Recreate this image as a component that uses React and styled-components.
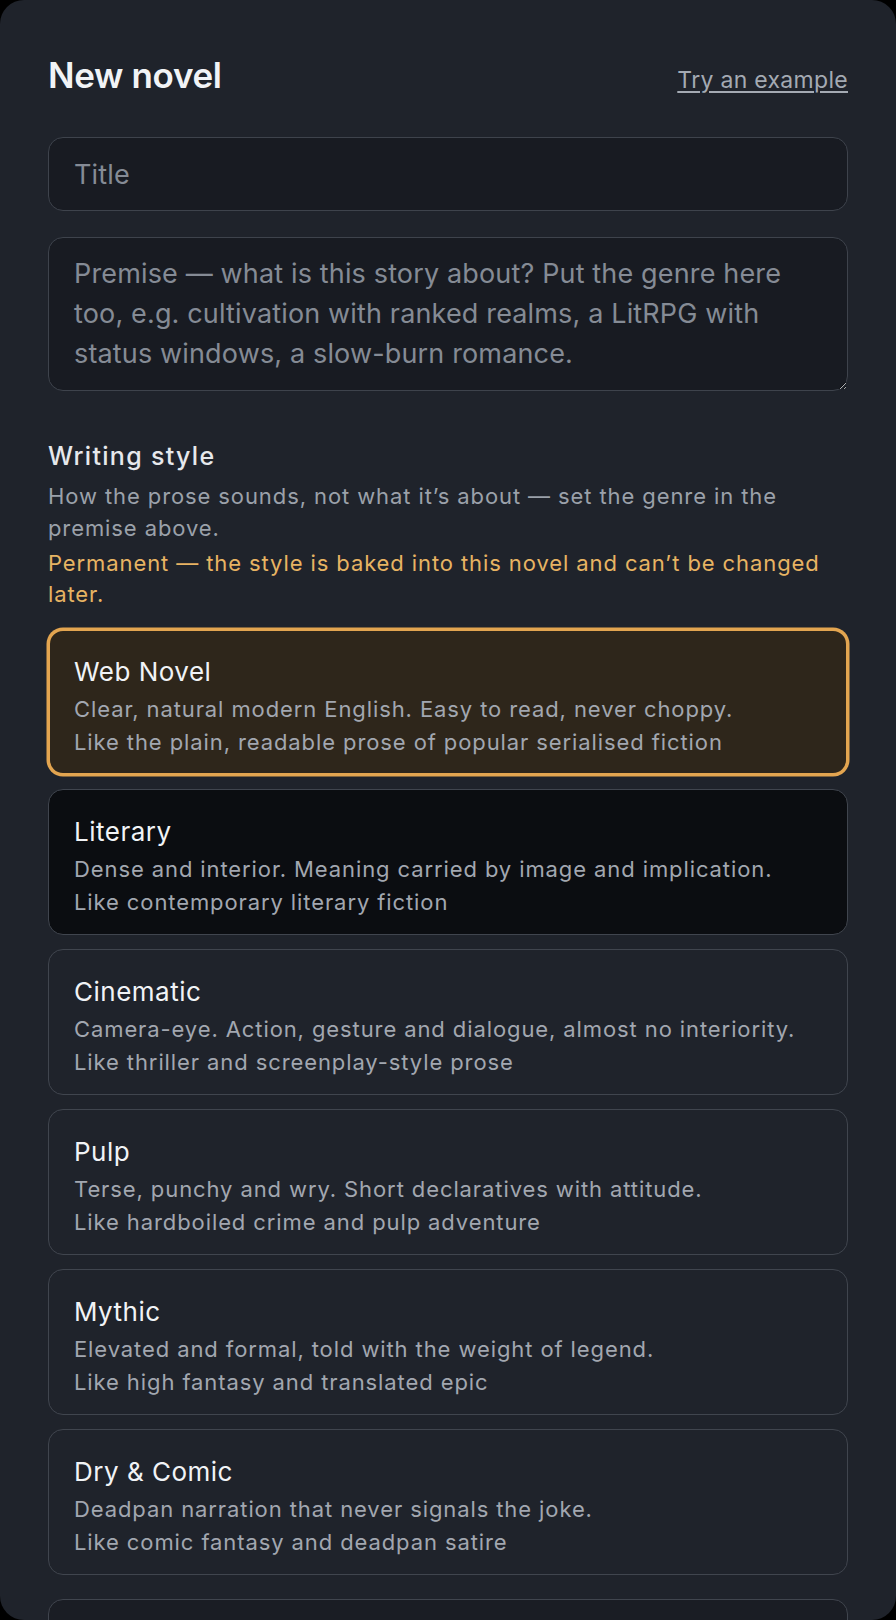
import React from 'react'
import styled, { createGlobalStyle } from 'styled-components'

const GlobalStyle = createGlobalStyle`
    * { box-sizing: border-box; }
    body {
        margin: 0;
        background: #000;
        font-family: Inter, "Noto Sans", "Liberation Sans", sans-serif;
        -webkit-font-smoothing: antialiased;
    }
`

const styles = [
    {
        id: 'web',
        name: 'Web Novel',
        lines: ['Clear, natural modern English. Easy to read, never choppy.', 'Like the plain, readable prose of popular serialised fiction'],
    },
    {
        id: 'literary',
        name: 'Literary',
        lines: ['Dense and interior. Meaning carried by image and implication.', 'Like contemporary literary fiction'],
    },
    {
        id: 'cinematic',
        name: 'Cinematic',
        lines: ['Camera-eye. Action, gesture and dialogue, almost no interiority.', 'Like thriller and screenplay-style prose'],
    },
    {
        id: 'pulp',
        name: 'Pulp',
        lines: ['Terse, punchy and wry. Short declaratives with attitude.', 'Like hardboiled crime and pulp adventure'],
    },
    {
        id: 'mythic',
        name: 'Mythic',
        lines: ['Elevated and formal, told with the weight of legend.', 'Like high fantasy and translated epic'],
    },
    {
        id: 'dry',
        name: 'Dry & Comic',
        lines: ['Deadpan narration that never signals the joke.', 'Like comic fantasy and deadpan satire'],
    },
]

const App = () => {
    return (
        <>
            <GlobalStyle />
            <Panel>
                <Header>
                    <Heading>New novel</Heading>
                    <ExampleLink href="#">Try an example</ExampleLink>
                </Header>

                <TitleInput placeholder="Title" />
                <PremiseInput
                    rows={3}
                    placeholder="Premise — what is this story about? Put the genre here too, e.g. cultivation with ranked realms, a LitRPG with status windows, a slow-burn romance."
                />

                <Section>
                    <Label>Writing style</Label>
                    <Hint>How the prose sounds, not what it’s about — set the genre in the premise above.</Hint>
                    <Warning>Permanent — the style is baked into this novel and can’t be changed later.</Warning>
                </Section>

                <StyleList>
                    {styles.map((s) => (
                        <StyleCard key={s.id} $state={s.id === 'web' ? 'selected' : s.id === 'literary' ? 'hover' : 'idle'}>
                            <CardName>{s.name}</CardName>
                            <CardText>
                                {s.lines[0]}
                                <br />
                                {s.lines[1]}
                            </CardText>
                        </StyleCard>
                    ))}
                </StyleList>

                <CustomCard $state="idle" />
            </Panel>
        </>
    )
}

export default App

const Panel = styled.main`
    width: 896px;
    height: 1620px;
    overflow: hidden;
    background: #1f232b;
    border-radius: 24px;
    padding: 53px 48px 0;
`

const Header = styled.div`
    display: flex;
    justify-content: space-between;
    align-items: baseline;
`

const Heading = styled.h1`
    margin: 0;
    font-size: 35px;
    line-height: 44px;
    font-weight: 600;
    letter-spacing: -0.01em;
    color: #f1f3f6;
`

const ExampleLink = styled.a`
    font-size: 23px;
    letter-spacing: 0.3px;
    color: #a4aab3;
    text-decoration: underline;
    text-underline-offset: 3px;
    text-decoration-thickness: 1.5px;
`

const fieldBase = `
    display: block;
    width: 100%;
    background: #181b22;
    border: 1px solid #3e434c;
    border-radius: 15px;
    color: #e5e7eb;
    font-family: Inter, "Noto Sans", "Liberation Sans", sans-serif;
    font-size: 27px;
    line-height: 40px;
    letter-spacing: 0.15px;
    padding: 16px 25px;
    outline: none;

    &::placeholder {
        color: #858b95;
    }
`

const TitleInput = styled.input`
    ${fieldBase}
    height: 74px;
    margin-top: 40px;
`

const PremiseInput = styled.textarea`
    ${fieldBase}
    height: 154px;
    margin-top: 26px;
    resize: vertical;
`

const Section = styled.div`
    margin-top: 49px;
`

const Label = styled.div`
    font-size: 25px;
    line-height: 32px;
    font-weight: 450;
    letter-spacing: 1.3px;
    color: #e6e8ec;
`

const Hint = styled.p`
    margin: 8px 0 0;
    font-size: 22px;
    line-height: 32px;
    letter-spacing: 0.9px;
    color: #9ba1aa;
`

const Warning = styled.p`
    margin: 4px 0 0;
    font-size: 22px;
    line-height: 31px;
    letter-spacing: 0.9px;
    color: #e7b463;
`

const StyleList = styled.div`
    display: flex;
    flex-direction: column;
    gap: 14px;
    margin-top: 19px;
`

const cardBg = {
    selected: '#2e261b',
    hover: '#0b0d11',
    idle: 'transparent',
}

const StyleCard = styled.div`
    height: 146px;
    padding: ${(p) => (p.$state === 'selected' ? '24px 24px 0' : '25px 25px 0')};
    border: ${(p) => (p.$state === 'selected' ? '2px solid #e3a550' : '1px solid #40454e')};
    box-shadow: ${(p) => (p.$state === 'selected' ? '0 0 0 1.5px #e3a550' : 'none')};
    border-radius: 15px;
    background: ${(p) => cardBg[p.$state]};
    cursor: pointer;
`

const CustomCard = styled(StyleCard)`
    margin-top: 24px;
    background: #1a1d24;
`

const CardName = styled.div`
    font-size: 26px;
    line-height: 34px;
    letter-spacing: 0.5px;
    color: #f1f3f6;
`

const CardText = styled.div`
    margin-top: 4px;
    font-size: 22px;
    line-height: 32.5px;
    letter-spacing: 0.9px;
    color: #a2a7b0;
`
